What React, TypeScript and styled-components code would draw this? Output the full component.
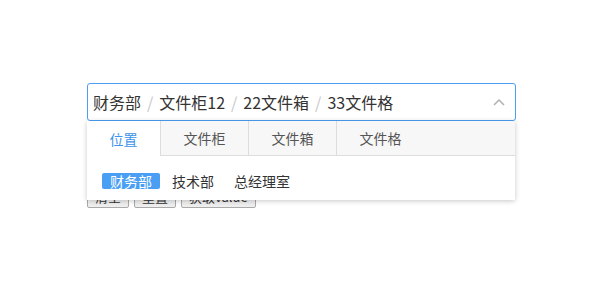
import React, { useState } from 'react';
import styled, { createGlobalStyle } from 'styled-components';

const GlobalStyle = createGlobalStyle`
    html, body {
        margin: 0;
        padding: 0;
        background: #fff;
        font-family: "Noto Sans CJK SC", "Noto Sans", sans-serif;
    }
`;

const Page = styled.div`
    width: 429px;
    padding: 83px 0 0 87px;
`;

const Picker = styled.div`
    position: relative;
    z-index: 1;
`;

const Field = styled.div`
    box-sizing: border-box;
    display: flex;
    align-items: center;
    height: 38px;
    padding: 0 10px 0 5px;
    border: 1px solid #4a9ff5;
    border-radius: 3px;
    font-size: 16px;
    line-height: 20px;
    color: #333;
`;

const Path = styled.div`
    flex: 1;
    white-space: nowrap;
`;

const Sep = styled.span`
    margin: 0 6px;
    color: #c8c8c8;
`;

const Arrow = styled.svg`
    width: 12px;
    height: 8px;
`;

const Buttons = styled.div`
    display: flex;
    gap: 5px;
    margin-top: 65px;
`;

const Button = styled.button`
    box-sizing: border-box;
    height: 22px;
    padding: 0 7px;
    border: 1px solid #a9a9a9;
    border-radius: 2px;
    background: #efefef;
    font-family: inherit;
    font-size: 13px;
    line-height: 20px;
    color: #333;
`;

const Dropdown = styled.div`
    position: absolute;
    top: 100%;
    left: 0;
    width: 428px;
    background: #fff;
    box-shadow: 0 1px 5px rgba(0, 0, 0, 0.22);
`;

const TabBar = styled.div`
    display: flex;
    height: 35px;
    background: #f7f7f7;
    border-bottom: 1px solid #ddd;
    box-sizing: border-box;
`;

const Tab = styled.div<{ $active?: boolean }>`
    display: flex;
    align-items: center;
    padding: 0 22.5px;
    border-right: 1px solid #ddd;
    font-size: 14px;
    color: ${p => (p.$active ? '#3d94ec' : '#555')};
    background: ${p => (p.$active ? '#fff' : 'transparent')};
    height: ${p => (p.$active ? '35px' : '34px')};
    cursor: pointer;

    &:last-child {
        border-right: none;
    }
`;

const Options = styled.div`
    display: flex;
    gap: 4px;
    padding: 17px 15px 11px;
`;

const Option = styled.span<{ $selected?: boolean }>`
    padding: 0 8px;
    height: 16px;
    line-height: 16px;
    font-size: 14px;
    border-radius: 2px;
    color: ${p => (p.$selected ? '#fff' : '#333')};
    background: ${p => (p.$selected ? '#4a9ff5' : 'transparent')};
    cursor: pointer;
`;

const tabs = ['位置', '文件柜', '文件箱', '文件格'];
const path = ['财务部', '文件柜12', '22文件箱', '33文件格'];
const places = ['财务部', '技术部', '总经理室'];

export default function App() {
    const [tab, setTab] = useState(0);
    const [place, setPlace] = useState(0);

    return (
        <Page>
            <GlobalStyle />
            <Picker>
                <Field>
                    <Path>
                        {path.map((p, i) => (
                            <React.Fragment key={p}>
                                {i > 0 && <Sep>/</Sep>}
                                {p}
                            </React.Fragment>
                        ))}
                    </Path>
                    <Arrow viewBox="0 0 12 8">
                        <path d="M1 7 L6 2 L11 7" fill="none" stroke="#b0b0b0" strokeWidth="1.5" />
                    </Arrow>
                </Field>
                <Dropdown>
                    <TabBar>
                        {tabs.map((t, i) => (
                            <Tab key={t} $active={i === tab} onClick={() => setTab(i)}>
                                {t}
                            </Tab>
                        ))}
                    </TabBar>
                    <Options>
                        {places.map((p, i) => (
                            <Option key={p} $selected={i === place} onClick={() => setPlace(i)}>
                                {p}
                            </Option>
                        ))}
                    </Options>
                </Dropdown>
            </Picker>
            <Buttons>
                <Button>清空</Button>
                <Button>重置</Button>
                <Button>获取value</Button>
            </Buttons>
        </Page>
    );
}
